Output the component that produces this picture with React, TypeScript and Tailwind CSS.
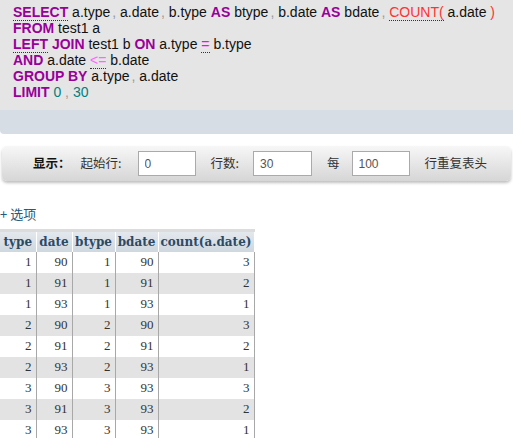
const kw = "font-bold text-[#990099]";
const dot = "border-b border-dotted border-[#333]";

const rows = [
  [1, 90, 1, 90, 3],
  [1, 91, 1, 91, 2],
  [1, 93, 1, 93, 1],
  [2, 90, 2, 90, 3],
  [2, 91, 2, 91, 2],
  [2, 93, 2, 93, 1],
  [3, 90, 3, 93, 3],
  [3, 91, 3, 93, 2],
  [3, 93, 3, 93, 1],
];

const cols = [
  { name: "type", w: "w-[36px]" },
  { name: "date", w: "w-[36px]" },
  { name: "btype", w: "w-[43px]" },
  { name: "bdate", w: "w-[43px]" },
  { name: "count(a.date)", w: "w-[96px]" },
];

function Comma() {
  return <span className="text-[#999] ml-[2px]">, </span>;
}

export default function App() {
  return (
    <div className="w-[513px] h-[438px] overflow-hidden bg-white font-['Liberation_Sans',Arial,sans-serif]">
      {/* sql box */}
      <div className="bg-[#e5e5e5] h-[110px] pl-[13px] pt-[4px] text-[14px] leading-[16px] text-[#111] whitespace-nowrap">
        <div>
          <span className={kw + " " + dot}>SELECT</span> a.type<Comma />a.date<Comma />b.type{" "}
          <span className={kw}>AS</span> btype<Comma />b.date <span className={kw}>AS</span> bdate
          <Comma />
          <span className={"text-[#ff3333] " + dot}>COUNT(</span> a.date <span className="text-[#ff3333]">)</span>
        </div>
        <div>
          <span className={kw}>FROM</span> test1 a
        </div>
        <div>
          <span className={kw + " " + dot}>LEFT</span> <span className={kw}>JOIN</span> test1 b{" "}
          <span className={kw}>ON</span> a.type <span className={"text-[#ff00ff] " + dot}>=</span> b.type
        </div>
        <div>
          <span className={kw}>AND</span> a.date <span className={"text-[#ff66ff] " + dot}>&lt;=</span> b.date
        </div>
        <div>
          <span className={kw}>GROUP BY</span> a.type<Comma />a.date
        </div>
        <div>
          <span className={kw}>LIMIT</span> <span className="text-[#008080]">0</span>
          <span className="text-[#999]"> , </span>
          <span className="text-[#008080]">30</span>
        </div>
      </div>
      <div className="h-[24px] bg-[#d7dde4] rounded-bl-[4px]"></div>

      {/* navigation bar */}
      <div className="mt-[12px] mx-[2px] h-[35px] rounded-[5px] bg-gradient-to-b from-[#f7f7f7] to-[#d6d6d6] shadow-[0_2px_3px_rgba(0,0,0,0.25)] flex items-center pl-[31px] text-[12.5px] text-[#333] font-['Noto_Sans_CJK_SC',sans-serif]">
        <span className="font-bold text-[#111]">显示：</span>
        <span className="ml-[10px]">起始行:</span>
        <input
          readOnly
          value="0"
          className="ml-[16px] w-[58px] h-[25px] bg-white border border-[#aaa] pl-[6px] text-[12px] text-[#555] font-['Liberation_Sans',sans-serif] outline-none"
        />
        <span className="ml-[15px]">行数:</span>
        <input
          readOnly
          value="30"
          className="ml-[14px] w-[59px] h-[25px] bg-white border border-[#aaa] pl-[6px] text-[12px] text-[#555] font-['Liberation_Sans',sans-serif] outline-none"
        />
        <span className="ml-[15px]">每</span>
        <input
          readOnly
          value="100"
          className="ml-[12px] w-[58px] h-[25px] bg-white border border-[#aaa] pl-[6px] text-[12px] text-[#555] font-['Liberation_Sans',sans-serif] outline-none"
        />
        <span className="ml-[15px]">行重复表头</span>
      </div>

      {/* options */}
      <div className="mt-[25px] text-[13px] leading-[16px] text-[#235a81] font-['Noto_Sans_CJK_SC',sans-serif]">+ 选项</div>

      {/* results */}
      <table className="mt-[7px] border-collapse border-t-[3px] border-[#dcdcdc] text-[13px]">
        <thead>
          <tr className="bg-gradient-to-b from-[#e4e9ee] to-[#cfd7df]">
            {cols.map((c) => (
              <th
                key={c.name}
                className={
                  c.w +
                  " h-[21px] p-0 text-center font-bold text-[12px] text-[#2b4a66] font-['DejaVu_Serif',serif] border-r border-white whitespace-nowrap"
                }
              >
                {c.name}
              </th>
            ))}
          </tr>
        </thead>
        <tbody>
          {rows.map((r, i) => (
            <tr key={i} className={i % 2 === 1 ? "bg-[#e3e3e3]" : "bg-white"}>
              {r.map((v, j) => (
                <td
                  key={j}
                  className="h-[21px] p-0 pr-[4px] text-right text-[13px] text-[#333] font-['Liberation_Serif',serif] border-r border-[#a8a8a8]"
                >
                  {v}
                </td>
              ))}
            </tr>
          ))}
        </tbody>
      </table>
    </div>
  );
}
